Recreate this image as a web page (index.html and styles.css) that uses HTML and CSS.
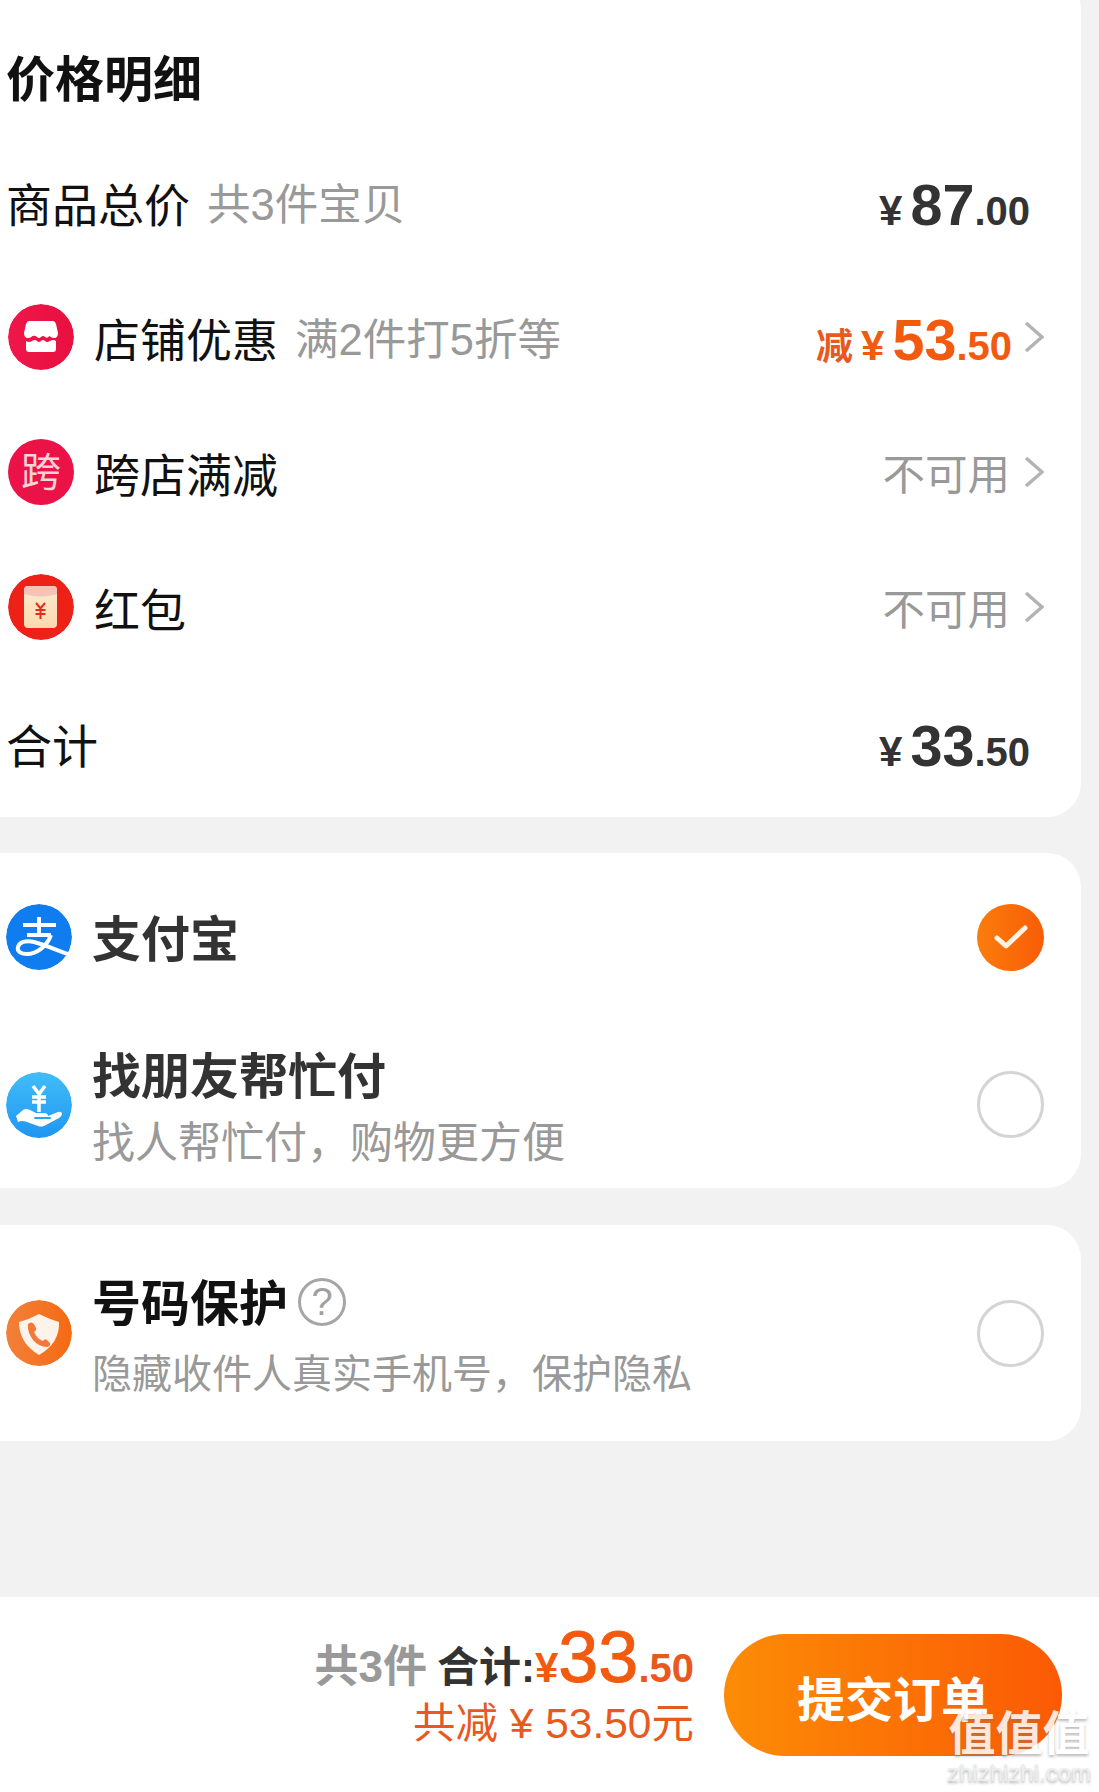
FILE: index.html
```html
<!DOCTYPE html>
<html lang="zh-CN">
<head>
<meta charset="utf-8">
<title>价格明细</title>
<link rel="stylesheet" href="styles.css">
</head>
<body>
<main class="content">
  <section class="card card-price">
    <h2 class="price-title">价格明细</h2>
    <div class="row">
      <span class="label label-bare">商品总价</span><span class="hint">共3件宝贝</span>
      <span class="amount amount-plain"><span class="yen">¥</span><span class="int">87</span><span class="dec">.00</span></span>
    </div>
    <div class="row">
      <svg class="icon" viewBox="0 0 66 66"><defs><linearGradient id="g1" x1="0" x2="1"><stop offset="0" stop-color="#f0164a"/><stop offset="1" stop-color="#e8103f"/></linearGradient></defs><circle cx="33" cy="33" r="33" fill="url(#g1)"/><path d="M21 17H45Q47 17 48 20L50 29Q50 34 46 34Q43 34 41.500 32Q39 35 37 33Q35 31 33 33Q31 35 29 33Q27 31 24.500 32Q23 34 20 34Q16 34 16 29L18 20Q19 17 21 17Z" fill="#fff"/><path d="M18 37Q21 39 24 37Q27 35 29 37Q31 39 33 37Q35 35 37 37Q39 39 42 37Q45 35 48 37V45Q48 48 45 48H21Q18 48 18 45Z" fill="#fff"/></svg>
      <span class="label">店铺优惠</span><span class="hint">满2件打5折等</span>
      <span class="amount amount-sale"><span class="cut">减</span><span class="yen">¥</span><span class="int">53</span><span class="dec">.50</span></span>
      <svg class="chevron" viewBox="0 0 20 32"><path d="M2 2L18 16L2 30" /></svg>
    </div>
    <div class="row">
      <span class="icon icon-cross">跨</span>
      <span class="label">跨店满减</span>
      <span class="muted">不可用</span>
      <svg class="chevron" viewBox="0 0 20 32"><path d="M2 2L18 16L2 30" /></svg>
    </div>
    <div class="row">
      <svg class="icon" viewBox="0 0 66 66"><defs><linearGradient id="g2" x1="0" y1="0" x2="0" y2="1"><stop offset="0" stop-color="#fbeccf"/><stop offset="1" stop-color="#fbd9ae"/></linearGradient></defs><circle cx="33" cy="33" r="33" fill="#ee2118"/><rect x="16" y="12" width="33" height="42" rx="4" fill="url(#g2)"/><path d="M16 16Q16 12 20 12H45Q49 12 49 16V20Q33 25 16 20Z" fill="#f6c3b8"/><path d="M28 29L32.500 34.500L37 29M27.500 36H37.500M27.500 40H37.500M32.500 34.500V45" fill="none" stroke="#e8281c" stroke-width="2"/></svg>
      <span class="label">红包</span>
      <span class="muted">不可用</span>
      <svg class="chevron" viewBox="0 0 20 32"><path d="M2 2L18 16L2 30" /></svg>
    </div>
    <div class="row row-total">
      <span class="label label-bare">合计</span>
      <span class="amount amount-plain"><span class="yen">¥</span><span class="int">33</span><span class="dec">.50</span></span>
    </div>
  </section>

  <section class="card card-pay">
    <div class="pay-row pay-row-first">
      <svg class="icon" viewBox="0 0 66 66"><circle cx="33" cy="33" r="33" fill="#0f7cf0"/><path d="M33 13V31M17 21H50M21 31H45M45 31C41 42 31 50 21 50C14 50 11 47 12 43C13 38 20 36 28 38C37 40 50 46 64 51" fill="none" stroke="#fff" stroke-width="4"/></svg>
      <div class="pay-text pay-text-single"><div class="pay-name">支付宝</div></div>
      <span class="radio radio-on"><svg viewBox="0 0 34 26"><path d="M3 14L12 22L31 4" /></svg></span>
    </div>
    <div class="pay-row pay-row-second">
      <svg class="icon" viewBox="0 0 66 66"><defs><linearGradient id="g3" x1="0" y1="0" x2="0" y2="1"><stop offset="0" stop-color="#42bdf8"/><stop offset="1" stop-color="#1f96f2"/></linearGradient></defs><circle cx="33" cy="33" r="33" fill="url(#g3)"/><path d="M27 14L33 22L39 14M26 25H40M26 30H40M33 22V40" fill="none" stroke="#fff" stroke-width="3.500"/><path d="M10 44L17 38Q20 36 24 38L30 41H38Q42 41 42 44L52 40Q56 39 56 42Q56 44 53 46L38 54Q35 55 32 54L21 50Q16 48 12 50Z" fill="#fff"/><path d="M29 46H44" fill="none" stroke="#2aa3f4" stroke-width="2" stroke-linecap="round"/></svg>
      <div class="pay-text pay-text-offset"><div class="pay-name">找朋友帮忙付</div><div class="pay-desc">找人帮忙付，购物更方便</div></div>
      <span class="radio"></span>
    </div>
  </section>

  <section class="card card-phone">
    <div class="pay-row pay-row-phone">
      <svg class="icon" viewBox="0 0 66 66"><defs><linearGradient id="g4" x1="0" x2="1"><stop offset="0" stop-color="#f3803a"/><stop offset="1" stop-color="#f56a12"/></linearGradient></defs><circle cx="33" cy="33" r="33" fill="url(#g4)"/><path d="M13 22Q24 19 33 14Q43 19 53 22Q54 43 33 55Q13 43 13 22Z" fill="#fdf3ea"/><path d="M22 24Q25 21 28 24L30 28Q31 30 28 32Q31 39 37 41Q39 38 41 40L44 43Q45 46 41 47Q33 47 27 40Q21 32 22 24Z" fill="#f2793a"/></svg>
      <div class="pay-text pay-text-wide">
        <div class="pay-name pay-name-dark">号码保护<span class="help">?</span></div>
        <div class="pay-desc">隐藏收件人真实手机号，保护隐私</div>
      </div>
      <span class="radio"></span>
    </div>
  </section>
</main>

<footer class="bar">
  <div class="totals">
    <div class="totals-main"><span class="count">共3件</span><span class="sum-label">合计:</span><span class="sum-yen">¥</span><span class="sum-int">33</span><span class="sum-dec">.50</span></div>
    <div class="totals-cut">共减 ¥ 53.50元</div>
  </div>
  <button class="submit">提交订单</button>
  <div class="mark"><div class="mark-cn">值值值</div><div class="mark-en">zhizhizhi.com</div></div>
</footer>
</body>
</html>
```

FILE: styles.css
```css
* { box-sizing: border-box; }
html, body { margin: 0; padding: 0; }
body {
  width: 1099px;
  height: 1792px;
  overflow: hidden;
  display: flex;
  flex-direction: column;
  background: #f2f2f2;
  color: #111;
  font-family: "Liberation Sans", "Noto Sans CJK SC", sans-serif;
}
.content { flex: 1; display: flex; flex-direction: column; gap: 36px; }
.card { width: 1081px; background: #fff; border-radius: 0 34px 34px 0; }
.card-price { margin-top: -24px; height: 841px; padding: 24px 0 0 8px; }
.card-pay { height: 335px; }
.card-phone { height: 216px; margin-top: 1px; }

.price-title {
  margin: 0 0 0 -2px;
  height: 134px;
  padding-top: 16px;
  display: flex;
  align-items: center;
  font-size: 49px;
  font-weight: 700;
  color: #111;
}
.row { height: 135px; display: flex; align-items: center; padding-right: 37px; }
.row-total { margin-top: 1px; }
.icon { width: 66px; height: 66px; flex: none; margin-right: 20px; border-radius: 50%; }
.icon-cross {
  background: #ea1247;
  color: #f9d3d8;
  font-size: 40px;
  line-height: 66px;
  text-align: center;
}
.label { font-size: 46px; color: #111; }
.label-bare { margin-left: -2px; }
.hint { font-size: 43.500px; color: #999; margin-left: 17px; }
.muted { font-size: 42.500px; color: #999; margin: 0 2px 0 auto; }
.amount { margin-left: auto; margin-top: 6px; display: flex; align-items: baseline; font-weight: 700; color: #333; }
.amount-plain { margin-right: 14px; }
.amount-sale { color: #f25a0f; }
.yen { font-size: 42px; margin-right: 8px; }
.int { font-size: 57.500px; }
.dec { font-size: 40px; }
.cut { font-size: 37px; margin-right: 8px; color: #e8591e; }
.chevron { width: 20px; height: 32px; flex: none; margin-left: 12px; margin-top: 0; }
.chevron path { fill: none; stroke: #b3b3b3; stroke-width: 3.500; }

.pay-row { display: flex; align-items: center; padding: 0 37px 0 6px; }
.pay-row-first { height: 168px; }
.pay-row-second { height: 167px; }
.pay-row-phone { height: 216px; }
.pay-row .icon { margin-right: 20px; }
.pay-text { flex: 1; }
.pay-text-single { padding-top: 5px; }
.pay-text-offset { padding-top: 10px; }
.pay-text-wide { padding-top: 12px; }
.pay-name { font-size: 49px; line-height: 66px; font-weight: 700; color: #333; display: flex; align-items: center; }
.pay-name-dark { color: #111; }
.pay-desc { font-size: 43px; line-height: 66px; color: #999; }
.pay-text-wide .pay-desc { margin-top: 4px; font-size: 40px; }
.help {
  width: 48px;
  height: 48px;
  margin: -4px 0 0 10px;
  border: 3px solid #a6a6a6;
  border-radius: 50%;
  font-size: 38px;
  line-height: 42px;
  font-weight: 400;
  text-align: center;
  color: #a0a0a0;
}
.radio {
  width: 67px;
  height: 67px;
  flex: none;
  border: 3px solid #d4d4d4;
  border-radius: 50%;
  display: flex;
  align-items: center;
  justify-content: center;
}
.radio-on { border: 0; background: linear-gradient(90deg, #fa7d0c, #f95c06); }
.radio svg { width: 34px; height: 26px; }
.radio path { fill: none; stroke: #fff3e4; stroke-width: 5; stroke-linecap: round; stroke-linejoin: round; }

.bar {
  position: relative;
  height: 195px;
  flex: none;
  background: #fff;
  display: flex;
  justify-content: flex-end;
  align-items: center;
  padding: 0 37px 0 0;
}
.totals { margin: 0 30px 25px 0; text-align: right; }
.totals-main { display: flex; align-items: baseline; justify-content: flex-end; height: 83px; font-weight: 700; font-size: 42px; }
.count { color: #999; font-size: 44px; margin-right: 10px; }
.sum-label { color: #333; }
.sum-yen { color: #f25a0f; font-size: 42px; }
.sum-int { color: #f25a0f; font-size: 72px; font-weight: 400; -webkit-text-stroke: 1px #f25a0f; }
.sum-dec { color: #e8591e; font-size: 40px; }
.totals-cut { font-size: 42.500px; line-height: 50px; color: #e8591e; }
.submit {
  width: 338px;
  height: 122px;
  border: 0;
  border-radius: 61px;
  padding: 2px 0 0;
  background: linear-gradient(90deg, #fc8c06, #fb5a04);
  color: #fff;
  font-family: inherit;
  font-size: 48px;
  font-weight: 700;
}
.mark {
  position: absolute;
  right: 8px;
  bottom: 5px;
  white-space: nowrap;
  text-align: center;
  color: #fff;
  text-shadow: 0 2px 3px rgba(120, 120, 120, .6);
}
.mark-cn { font-size: 47px; line-height: 50px; font-weight: 700; opacity: .85; }
.mark-en { font-size: 24px; line-height: 28px; color: #eee; }
```
